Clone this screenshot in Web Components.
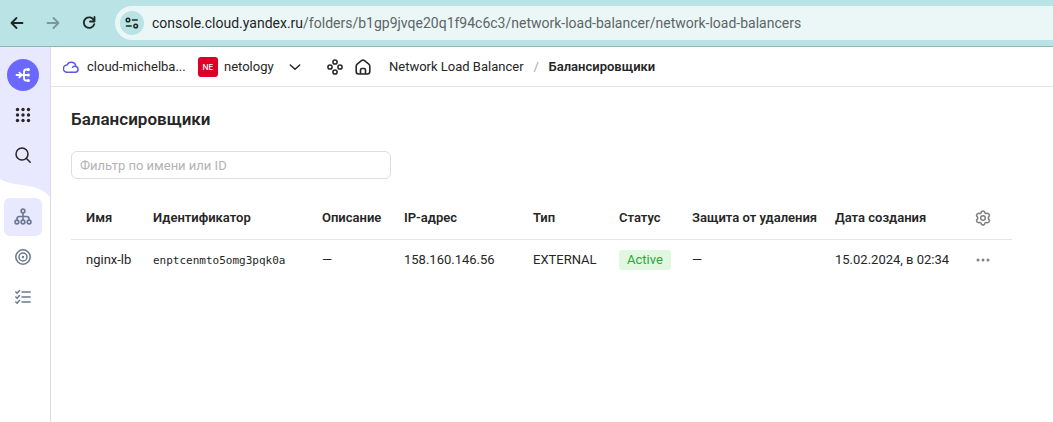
<!DOCTYPE html>
<html lang="ru">
<head>
<meta charset="utf-8">
<title>Балансировщики</title>
<style>
body { margin: 0; background: #fff; color: #262626; font: 13px/20px Roboto, "Noto Sans", sans-serif; }
</style>
</head>
<body>
<app-page></app-page>
<script>
const reset = `
  * { box-sizing: border-box; }
  svg { display: block; fill: none; stroke: currentColor; stroke-linecap: round; stroke-linejoin: round; }
  button { display: flex; align-items: center; justify-content: center; padding: 0; border: 0; background: none; color: inherit; font: inherit; cursor: pointer; }
  a { color: inherit; text-decoration: none; }
`;
function define(name, css, html) {
  const template = document.createElement('template');
  template.innerHTML = `<style>${reset}${css}</style>${html}`;
  customElements.define(name, class extends HTMLElement {
    constructor() {
      super();
      this.attachShadow({ mode: 'open' }).append(template.content.cloneNode(true));
    }
  });
}

define('browser-bar', `
  :host { display: flex; align-items: center; height: 47px; padding-left: 5px; background: #b9e3e4; border-bottom: 1px solid #8fb5b5; color: #1f2626; }
  button { width: 24px; height: 24px; margin-right: 12px; }
  button:disabled { color: #7b9798; }
  .address { display: flex; align-items: center; flex: 1; min-width: 0; height: 34px; margin-left: 2px; padding-left: 5px; background: #ebf7f7; border-radius: 17px 0 0 17px; }
  .address button { flex: none; width: 24px; height: 24px; margin-right: 8px; border-radius: 50%; background: #b9e3e4; }
  .url { font-size: 14px; color: #5d6566; white-space: nowrap; }
  .url b { font-weight: 400; color: #1f2626; }
`, `
  <button aria-label="Назад"><svg width="14" height="14" viewBox="0 0 14 14" stroke-width="1.8"><path d="M12.500 7H2M6.500 2 1.500 7l5 5"/></svg></button>
  <button aria-label="Вперёд" disabled><svg width="14" height="14" viewBox="0 0 14 14" stroke-width="1.800"><path d="M1.500 7H12M7.500 2l5 5-5 5"/></svg></button>
  <button aria-label="Обновить"><svg width="14" height="14" viewBox="0 0 14 14" stroke-width="1.800"><path d="M12 4.500A5.300 5.300 0 1 0 12.200 8.200M12.500 1v4.500H8"/></svg></button>
  <div class="address">
    <button aria-label="Сведения о сайте"><svg width="14" height="12" viewBox="0 0 14 12" stroke-width="1.500"><circle cx="3" cy="3" r="1.800"/><path d="M7.500 3h4.700M1.500 9h4.700"/><circle cx="10.700" cy="9" r="1.800"/></svg></button>
    <span class="url"><b>console.cloud.yandex.ru</b>/folders/b1gp9jvqe20q1f94c6c3/network-load-balancer/network-load-balancers</span>
  </div>
`);

define('side-nav', `
  :host { display: block; border-right: 1px solid #dcdce3; background: #fff; }
  nav { display: flex; flex-direction: column; }
  .top { position: relative; height: 151px; padding: 8px 0 0 3px; color: #262626; }
  .wave { position: absolute; inset: 0; width: 100%; height: 100%; fill: #e8e8ff; stroke: none; }
  .top button, .items a { position: relative; display: flex; align-items: center; justify-content: center; width: 40px; height: 40px; }
  .logo span { display: grid; place-items: center; width: 32px; height: 32px; border-radius: 50%; background: #6b68ff; color: #fff; }
  .items { padding-left: 4px; display: flex; flex-direction: column; gap: 2px; color: #6b7a91; }
  .items a { width: 38px; height: 38px; border-radius: 6px; }
  .items a[aria-current] { background: #e8e8ff; }
`, `
  <nav aria-label="Сервисы">
    <div class="top">
      <svg class="wave" viewBox="0 0 50 151" preserveAspectRatio="none"><path d="M0 0H50V150C38 136 22 140 7 135Q3 134 0 132Z"/></svg>
      <button class="logo" aria-label="Network Load Balancer"><span><svg width="16" height="16" viewBox="0 0 16 16" stroke-width="1.800"><path d="M1.500 8H13M4.300 5.600 6.700 8l-2.400 2.400M13 2.500h-2Q9 2.500 9 5v6q0 2.500 2 2.500h2"/><g fill="currentColor" stroke="none"><circle cx="13.300" cy="2.500" r="1.600"/><circle cx="13.300" cy="8" r="1.600"/><circle cx="13.300" cy="13.500" r="1.600"/></g></svg></span></button>
      <button aria-label="Все сервисы"><svg width="16" height="16" viewBox="0 0 16 16"><g fill="currentColor" stroke="none"><circle cx="2.500" cy="2.500" r="1.700"/><circle cx="8" cy="2.500" r="1.700"/><circle cx="13.500" cy="2.500" r="1.700"/><circle cx="2.500" cy="8" r="1.700"/><circle cx="8" cy="8" r="1.700"/><circle cx="13.500" cy="8" r="1.700"/><circle cx="2.500" cy="13.500" r="1.700"/><circle cx="8" cy="13.500" r="1.700"/><circle cx="13.500" cy="13.500" r="1.700"/></g></svg></button>
      <button aria-label="Поиск"><svg width="16" height="16" viewBox="0 0 16 16" stroke-width="1.500"><circle cx="7" cy="7" r="6"/><path d="m11.500 11.500 3.700 3.700"/></svg></button>
    </div>
    <div class="items">
      <a href="#balancers" aria-label="Балансировщики" aria-current="page"><svg width="18" height="18" viewBox="0 0 18 18" stroke-width="1.600"><circle cx="9" cy="3" r="1.900"/><circle cx="2.900" cy="14" r="1.900"/><circle cx="9" cy="14" r="1.900"/><circle cx="15.100" cy="14" r="1.900"/><path d="M9 5v7M3 12v-1q0-2.500 2.500-2.500h7Q15 8.500 15 11v1"/></svg></a>
      <a href="#groups" aria-label="Целевые группы"><svg width="16" height="16" viewBox="0 0 16 16" stroke-width="1.500"><circle cx="8" cy="8" r="7.200"/><circle cx="8" cy="8" r="4"/><circle cx="8" cy="8" r="1.200" fill="currentColor" stroke="none"/></svg></a>
      <a href="#operations" aria-label="Операции"><svg width="16" height="16" viewBox="0 0 16 16" stroke-width="1.500"><path d="M7 3h8.200M7 8h8.200M7 13h8.200M.800 3l1.300 1.200L4.500 1.500M.800 8l1.300 1.200 2.400-2.700M.800 13l1.300 1.200 2.400-2.700"/></svg></a>
    </div>
  </nav>
`);

define('top-bar', `
  :host { display: flex; align-items: center; height: 40px; padding-left: 12px; border-bottom: 1px solid #e5e5e5; white-space: nowrap; }
  a, nav { display: flex; align-items: center; }
  .cloud { gap: 8px; width: 135px; }
  .cloud svg { color: #5a57e0; }
  .folder { gap: 6px; width: 85px; }
  .badge { display: grid; place-items: center; width: 20px; height: 20px; border-radius: 3px; background: #dc0028; color: #fff; font: 500 8px/20px Inter, sans-serif; }
  .menu { width: 24px; height: 24px; margin-right: 20px; }
  .icon { width: 16px; height: 16px; margin-right: 12px; }
  nav { margin-left: 6px; }
  .sep { width: 25px; text-align: center; color: #a6a6a6; }
  strong { font-weight: 600; }
`, `
  <a class="cloud" href="#cloud"><svg width="16" height="16" viewBox="0 0 16 16" stroke-width="1.500"><path d="M4 13.300h8.200a3 3 0 0 0 .600-5.900 4.500 4.500 0 0 0-8.700-1.300A3.600 3.600 0 0 0 4 13.300ZM9.500 8.300q.800-1.200 2.500-1.200"/></svg><span>cloud-michelba...</span></a>
  <a class="folder" href="#folder"><span class="badge">NE</span><span>netology</span></a>
  <button class="menu" aria-label="Выбрать каталог"><svg width="12" height="12" viewBox="0 0 12 12" stroke-width="1.500"><path d="m1.300 4 4.700 4.300L10.700 4"/></svg></button>
  <button class="icon" aria-label="Сервисы"><svg width="16" height="16" viewBox="0 0 16 16" stroke-width="1.500"><circle cx="8" cy="3" r="2.100"/><circle cx="3" cy="8" r="2.100"/><circle cx="13" cy="8" r="2.100"/><circle cx="8" cy="13" r="2.100"/></svg></button>
  <a class="icon" href="#home" aria-label="Главная"><svg width="16" height="16" viewBox="0 0 16 16" stroke-width="1.600"><path d="M1.200 7.200v5.300q0 2.500 2.500 2.500h8.600q2.500 0 2.500-2.500V7.200Q14.800 6 13.800 5.200L9.500 1.700Q8 .500 6.500 1.700L2.200 5.200Q1.200 6 1.200 7.200ZM5.500 15v-4q0-1.500 1.500-1.500h2q1.500 0 1.500 1.500v4"/></svg></a>
  <nav aria-label="Навигация"><a href="#service">Network Load Balancer</a><span class="sep">/</span><strong>Балансировщики</strong></nav>
`);

define('status-label', `
  :host { display: inline-block; height: 20px; padding: 0 8px; border-radius: 3px; background: #e0f7e0; color: #30a33c; }
`, `<slot></slot>`);

define('balancer-table', `
  :host { display: block; }
  table { width: 100%; table-layout: fixed; border-collapse: collapse; white-space: nowrap; }
  th, td { height: 42px; padding: 0 0 0 10px; text-align: left; }
  th { font-weight: 600; border-bottom: 1px solid #e5e5e5; }
  th:first-child, td:first-child { padding-left: 15px; }
  code { font: 11px/20px "DejaVu Sans Mono", monospace; }
  button { width: 16px; height: 16px; color: #808080; }
`, `
  <table>
    <colgroup><col width="72"><col width="169"><col width="82"><col width="129"><col width="86"><col width="73"><col width="143"><col width="140"><col width="47"></colgroup>
    <thead><tr>
      <th>Имя</th><th>Идентификатор</th><th>Описание</th><th>IP-адрес</th><th>Тип</th><th>Статус</th><th>Защита от удаления</th><th>Дата создания</th>
      <th><button aria-label="Настройки"><svg width="16" height="16" viewBox="0 0 16 16" stroke-width="1.500"><circle cx="8" cy="8" r="2.300"/><path d="M6.600 1.600Q8 .300 9.400 1.600L10 3q.400.600 1.200.500l1.300-.200q1.800.300 2 2.200l-.900 1.500q-.600 1 0 2l.900 1.500q-.200 1.900-2 2.200l-1.300-.200q-.800-.100-1.200.500l-.600 1.400Q8 15.700 6.600 14.400L6 13q-.400-.600-1.200-.500l-1.300.200q-1.800-.300-2-2.200L2.400 9q.600-1 0-2l-.900-1.500q.200-1.900 2-2.200l1.300.200Q5.600 3.600 6 3Z"/></svg></button></th>
    </tr></thead>
    <tbody><tr>
      <td><a href="#nginx-lb">nginx-lb</a></td><td><code>enptcenmto5omg3pqk0a</code></td><td>—</td><td>158.160.146.56</td><td>EXTERNAL</td><td><status-label>Active</status-label></td><td>—</td><td>15.02.2024, в 02:34</td>
      <td><button aria-label="Действия"><svg width="16" height="16" viewBox="0 0 16 16"><g fill="currentColor" stroke="none"><circle cx="3" cy="8" r="1.500"/><circle cx="8" cy="8" r="1.500"/><circle cx="13" cy="8" r="1.500"/></g></svg></button></td>
    </tr></tbody>
  </table>
`);

define('app-page', `
  :host { display: flex; flex-direction: column; min-height: 100vh; }
  .body { display: flex; flex: 1; }
  side-nav { flex: none; width: 51px; }
  .main { flex: 1; min-width: 0; }
  main { padding: 20px 41px 20px 20px; }
  h1 { margin: 0; font-size: 17px; line-height: 24px; font-weight: 600; }
  input { display: block; width: 320px; height: 28px; margin: 20px 0 18px; padding: 0 8px; border: 1px solid #dedede; border-radius: 6px; background: #fff; color: inherit; font: inherit; outline: none; }
  input::placeholder { color: #b3b3b3; opacity: 1; }
`, `
  <browser-bar></browser-bar>
  <div class="body">
    <side-nav></side-nav>
    <div class="main">
      <top-bar></top-bar>
      <main>
        <h1>Балансировщики</h1>
        <input type="text" aria-label="Фильтр по имени или ID" placeholder="Фильтр по имени или ID">
        <balancer-table></balancer-table>
      </main>
    </div>
  </div>
`);
</script>
</body>
</html>
